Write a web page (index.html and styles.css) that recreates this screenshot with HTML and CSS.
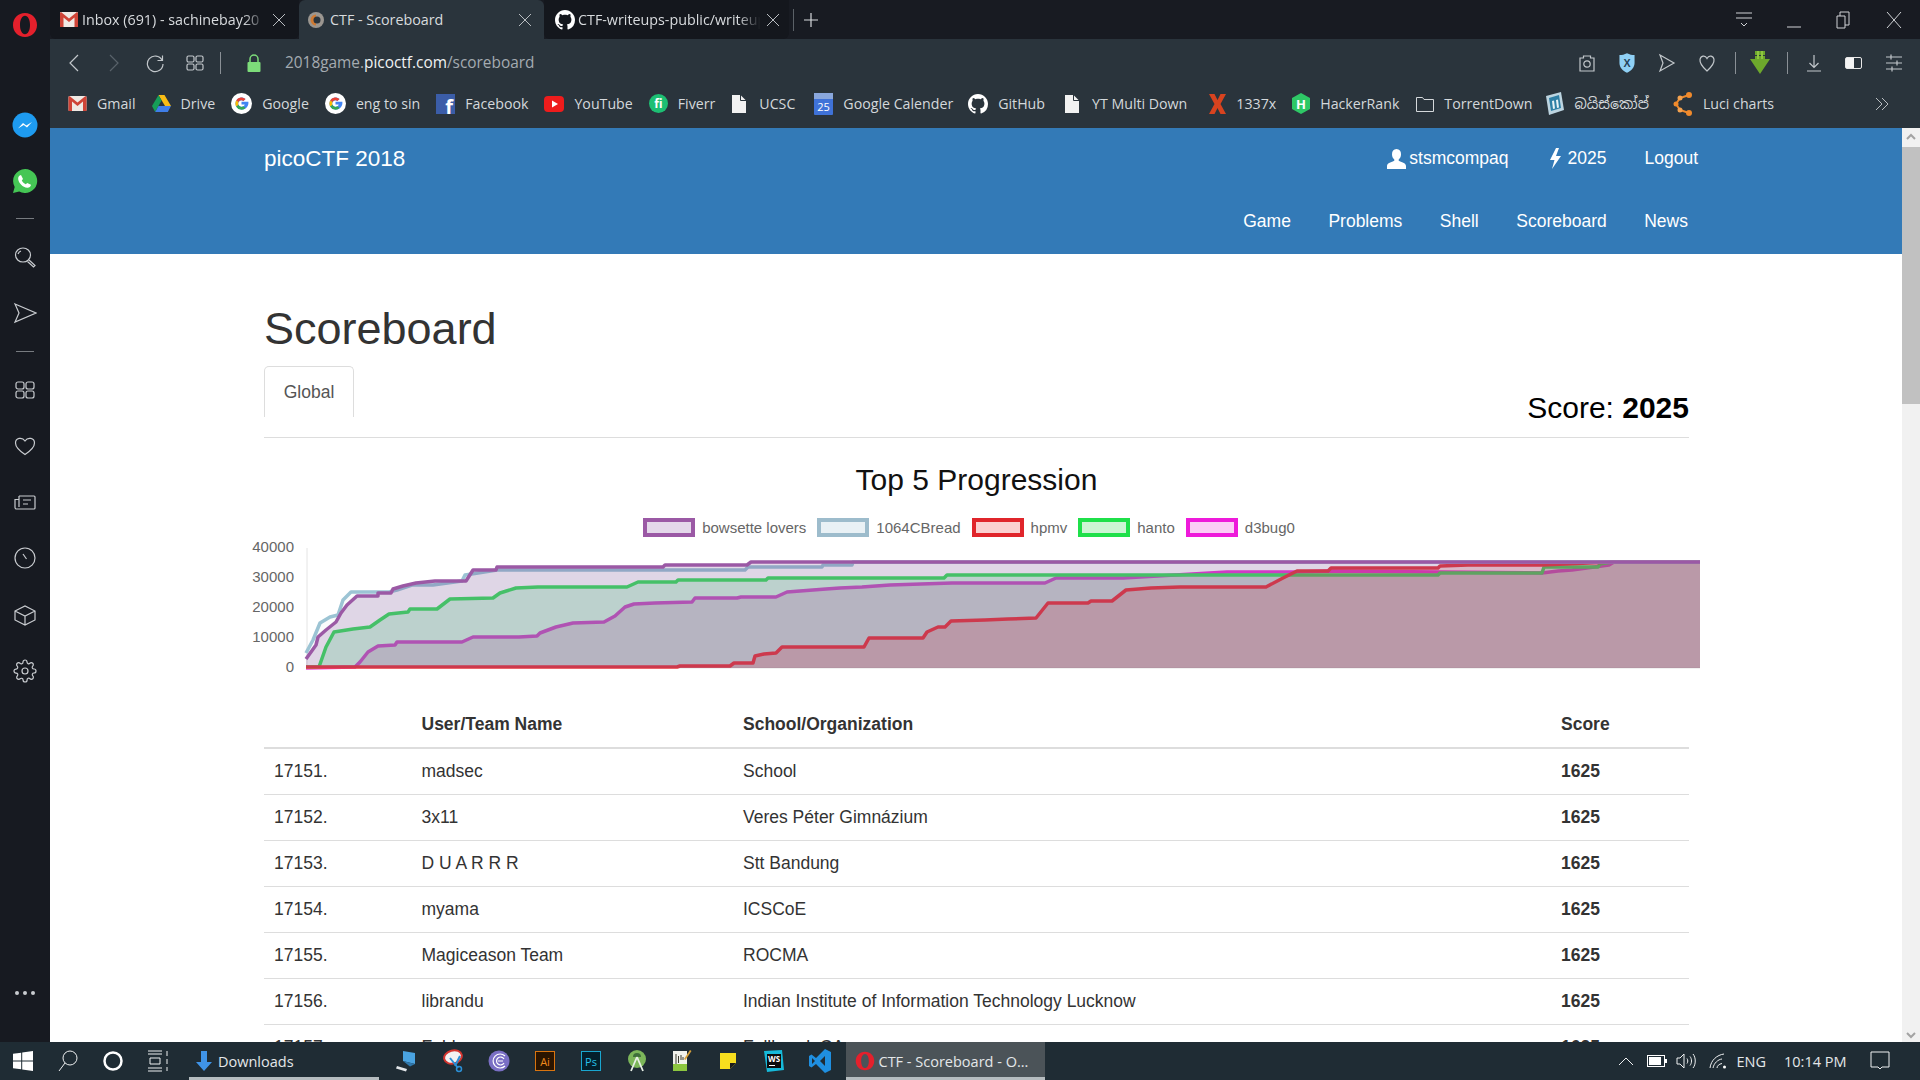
FILE: index.html
```html
<!DOCTYPE html>
<html lang="en">
<head>
    <meta charset="UTF-8">
    <title>CTF - Scoreboard</title>
    <link rel="stylesheet" href="styles.css">
</head>
<body>
    <svg class="sprite" width="0" height="0">
        <symbol id="g-logo" viewBox="0 0 22 22">
            <circle cx="11" cy="11" r="11" fill="#fff"/>
            <path d="M11 9.2h7.2c.6 4.4-2.4 8.2-7.2 8.2a6.4 6.4 0 0 1 0-12.8c1.7 0 3.1.6 4.2 1.6l-2.2 2.2A3.4 3.4 0 0 0 7.6 11c0 1.9 1.5 3.4 3.4 3.4 1.8 0 3-1 3.3-2.4H11z" fill="#4285f4"/>
            <path d="M5.4 7.9a6.4 6.4 0 0 1 9.8-1.7L13 8.4a3.4 3.4 0 0 0-5.1.9z" fill="#ea4335"/>
            <path d="M4.6 11c0-1.1.3-2.2.8-3.1l2.5 1.4a3.4 3.4 0 0 0 0 3.4l-2.5 1.4a6.4 6.4 0 0 1-.8-3.1z" fill="#fbbc05"/>
            <path d="M5.4 14.1l2.5-1.4a3.4 3.4 0 0 0 5 1.2l2.4 1.9a6.4 6.4 0 0 1-9.9-1.7z" fill="#34a853"/>
        </symbol>
        <symbol id="doc" viewBox="0 0 16 20">
            <path d="M1 1h8.5L15 6.5V19H1z" fill="#f2f2f2"/>
            <path d="M9.5 1v5.5H15" fill="none" stroke="#2a343c"/>
        </symbol>
        <symbol id="octo" viewBox="0 0 16 16">
            <path fill="#fff" d="M8 0C3.58 0 0 3.58 0 8c0 3.54 2.29 6.53 5.47 7.59.4.07.55-.17.55-.38 0-.19-.01-.82-.01-1.49-2.01.37-2.53-.49-2.69-.94-.09-.23-.48-.94-.82-1.13-.28-.15-.68-.52-.01-.53.63-.01 1.08.58 1.23.82.72 1.21 1.87.87 2.33.66.07-.52.28-.87.51-1.07-1.78-.2-3.64-.89-3.64-3.95 0-.87.31-1.59.82-2.15-.08-.2-.36-1.02.08-2.12 0 0 .67-.21 2.2.82.64-.18 1.32-.27 2-.27s1.36.09 2 .27c1.53-1.04 2.2-.82 2.2-.82.44 1.1.16 1.92.08 2.12.51.56.82 1.27.82 2.15 0 3.07-1.87 3.75-3.65 3.95.29.25.54.73.54 1.48 0 1.07-.01 1.93-.01 2.2 0 .21.15.46.55.38A8.01 8.01 0 0 0 16 8c0-4.42-3.58-8-8-8z"/>
        </symbol>
        <symbol id="opera-o" viewBox="0 0 26 26">
            <path fill-rule="evenodd" d="M13 1c7 0 12 5.3 12 12s-5 12-12 12S1 19.700 1 13 6 1 13 1zm0 2.800c-3 0-5 4-5 9.200s2 9.200 5 9.200 5-4 5-9.200-2-9.200-5-9.200z" fill="#e4202c"/>
        </symbol>
        <symbol id="gmail" viewBox="0 0 18 15">
            <rect width="18" height="15" rx="1" fill="#efe9e4"/>
            <path d="M0 1v14h3.500V5.500L9 10l5.500-4.500V15H18V1l-1-1-8 6.500L1 0z" fill="#cf4437"/>
        </symbol>
    </svg>

    <div class="browser">
        <nav class="sidebar">
            <div class="opera-slot">
                <svg width="26" height="26"><use href="#opera-o"/></svg>
            </div>
            <div class="side-item">
                <svg width="26" height="26" viewBox="0 0 26 26"><circle cx="13" cy="13" r="12.5" fill="#1e9bf0"/><path d="M6 16.500l5-5.500 3.300 2.500L20 10l-5 5.500-3.300-2.500z" fill="#fff"/></svg>
            </div>
            <div class="side-item">
                <svg width="26" height="26" viewBox="0 0 26 26"><path d="M13 1a12 12 0 0 0-10.300 18L1 25l6.200-1.600A12 12 0 1 0 13 1z" fill="#45c655"/><path d="M9 7l2 4-1.200 1.500c.9 1.800 2.200 3 4 3.800l1.400-1.300 3.800 1.800c-.3 2.200-2 3.200-3.800 3-4.500-.6-8.400-4.500-9-8.600C5.900 9 7 7.400 9 7z" fill="#fff"/></svg>
            </div>
            <div class="side-rule"></div>
            <div class="side-item">
                <svg class="line-icon" width="24" height="24" viewBox="0 0 24 24"><ellipse cx="10" cy="10" rx="7.500" ry="7"/><path d="M8 6a5 5 0 0 0-3 3"/><path d="M16 15l6 5.500-1.500 1.500-6-5.500"/></svg>
            </div>
            <div class="side-item">
                <svg class="line-icon" width="24" height="24" viewBox="0 0 24 24"><path d="M2 3l21 9-21 9 4-9z"/></svg>
            </div>
            <div class="side-rule"></div>
            <div class="side-item">
                <svg class="line-icon" width="24" height="24" viewBox="0 0 24 24"><rect x="3" y="4" width="8" height="7" rx="2"/><rect x="13" y="4" width="8" height="7" rx="2"/><rect x="3" y="13" width="8" height="7" rx="2"/><rect x="13" y="13" width="8" height="7" rx="2"/></svg>
            </div>
            <div class="side-item">
                <svg class="line-icon" width="24" height="24" viewBox="0 0 24 24"><path d="M12 20.500C6 16.500 2.500 13 2.500 9c0-5 6.500-6.500 9.500-2 3-4.500 9.500-3 9.500 2 0 4-3.500 7.500-9.500 11.500z"/></svg>
            </div>
            <div class="side-item">
                <svg class="line-icon" width="24" height="24" viewBox="0 0 24 24"><path d="M6 6h15a1 1 0 0 1 1 1v11a1 1 0 0 1-1 1H3.500A1.500 1.500 0 0 1 2 17.500V9.500h4M6 6v11M10 10h8M10 14h5"/></svg>
            </div>
            <div class="side-item">
                <svg class="line-icon" width="24" height="24" viewBox="0 0 24 24"><circle cx="12" cy="12" r="10"/><path d="M10 8l3.500 5"/></svg>
            </div>
            <div class="side-item">
                <svg class="line-icon" width="24" height="24" viewBox="0 0 24 24"><path d="M2 8l10-5 10 5v9l-10 5-10-5zM2 8l10 5 10-5M12 13v9"/></svg>
            </div>
            <div class="side-item">
                <svg class="line-icon" width="24" height="24" viewBox="0 0 24 24"><circle cx="12" cy="12" r="3"/><path d="M19.400 15a1.650 1.650 0 0 0 .33 1.820l.06.06a2 2 0 0 1 0 2.830 2 2 0 0 1-2.830 0l-.06-.06a1.650 1.650 0 0 0-1.820-.33 1.650 1.650 0 0 0-1 1.510V21a2 2 0 0 1-2 2 2 2 0 0 1-2-2v-.09A1.650 1.650 0 0 0 9 19.400a1.650 1.650 0 0 0-1.820.33l-.06.06a2 2 0 0 1-2.830 0 2 2 0 0 1 0-2.830l.06-.06a1.650 1.650 0 0 0 .33-1.820 1.650 1.650 0 0 0-1.510-1H3a2 2 0 0 1-2-2 2 2 0 0 1 2-2h.09A1.650 1.650 0 0 0 4.600 9a1.650 1.650 0 0 0-.33-1.820l-.06-.06a2 2 0 0 1 0-2.830 2 2 0 0 1 2.830 0l.06.06a1.650 1.650 0 0 0 1.820.33H9a1.650 1.650 0 0 0 1-1.510V3a2 2 0 0 1 2-2 2 2 0 0 1 2 2v.09a1.650 1.650 0 0 0 1 1.510 1.650 1.650 0 0 0 1.820-.33l.06-.06a2 2 0 0 1 2.830 0 2 2 0 0 1 0 2.830l-.06.06a1.650 1.650 0 0 0-.33 1.820V9a1.650 1.650 0 0 0 1.510 1H21a2 2 0 0 1 2 2 2 2 0 0 1-2 2h-.09a1.650 1.650 0 0 0-1.510 1z"/></svg>
            </div>
            <div class="side-dots"><span></span><span></span><span></span></div>
        </nav>

        <div class="main">
            <div class="tabbar">
                <div class="tab tab-first">
                    <svg class="tab-icon" width="18" height="15"><use href="#gmail"/></svg>
                    <span class="tab-title tab-title-fade">Inbox (691) - sachinebay20</span>
                    <svg class="tab-close" width="14" height="14" viewBox="0 0 14 14"><path d="M1 1l12 12M13 1L1 13"/></svg>
                </div>
                <div class="tab tab-active">
                    <svg class="tab-icon" width="18" height="18" viewBox="0 0 18 18"><circle cx="9" cy="9" r="8" fill="#9b9690"/><path d="M9 3.500a5.500 5.500 0 0 0 0 11z" fill="#cf7a33"/><circle cx="10" cy="9" r="3.500" fill="#2a343c"/></svg>
                    <span class="tab-title">CTF - Scoreboard</span>
                    <svg class="tab-close" width="14" height="14" viewBox="0 0 14 14"><path d="M1 1l12 12M13 1L1 13"/></svg>
                </div>
                <div class="tab tab-last">
                    <svg class="tab-icon" width="20" height="20"><use href="#octo"/></svg>
                    <span class="tab-title tab-title-fade">CTF-writeups-public/writeups</span>
                    <svg class="tab-close" width="14" height="14" viewBox="0 0 14 14"><path d="M1 1l12 12M13 1L1 13"/></svg>
                </div>
                <div class="tab-sep"></div>
                <svg class="tab-plus" width="16" height="16" viewBox="0 0 16 16"><path d="M8 1v14M1 8h14"/></svg>
                <div class="win-controls">
                    <div class="win-btn"><svg width="20" height="20" viewBox="0 0 20 20"><path d="M2 3h16M2 8h16M7 13l3 3 3-3"/></svg></div>
                    <div class="win-btn"><svg width="20" height="20" viewBox="0 0 20 20"><path d="M3 17h14"/></svg></div>
                    <div class="win-btn"><svg width="20" height="20" viewBox="0 0 20 20"><path d="M6 6V2h9v13h-4M3 6h8v12H3z"/></svg></div>
                    <div class="win-btn"><svg width="20" height="20" viewBox="0 0 20 20"><path d="M3 2l14 16M17 2L3 18"/></svg></div>
                </div>
            </div>

            <div class="toolbar">
                <div class="tool"><svg class="tool-line" width="20" height="20" viewBox="0 0 20 20"><path d="M14 2l-8 8 8 8"/></svg></div>
                <div class="tool"><svg class="tool-line tool-dim" width="20" height="20" viewBox="0 0 20 20"><path d="M6 2l8 8-8 8"/></svg></div>
                <div class="tool tool-reload"><svg class="tool-line" width="20" height="20" viewBox="0 0 20 20"><path d="M17 7a7.800 7.800 0 1 0 1 4M17.500 2.500V7.500h-5"/></svg></div>
                <div class="tool"><svg class="tool-line" width="20" height="20" viewBox="0 0 20 20"><rect x="2" y="3" width="7" height="6" rx="1.500"/><rect x="11" y="3" width="7" height="6" rx="1.500"/><rect x="2" y="11" width="7" height="6" rx="1.500"/><rect x="11" y="11" width="7" height="6" rx="1.500"/></svg></div>
                <div class="tool-sep tool-sep-left"></div>
                <div class="tool"><svg width="16" height="20" viewBox="0 0 16 20"><path d="M4 9V6a4 4 0 0 1 8 0v3" fill="none" stroke="#7ddc7a" stroke-width="1.500"/><rect x="1.500" y="9" width="13" height="10" rx="1" fill="#7ddc7a"/></svg></div>
                <div class="url"><span>2018game.</span><b>picoctf.com</b><span>/scoreboard</span></div>
                <div class="tool-right">
                    <div class="tool"><svg class="tool-line" width="20" height="20" viewBox="0 0 20 20"><path d="M3 5h3.500V3h7v2H17v13H3z"/><circle cx="10" cy="11" r="3.200"/></svg></div>
                    <div class="tool"><svg width="16" height="20" viewBox="0 0 18 22"><path d="M9 0c3 1.500 5.500 2 8.500 2v9c0 5-3.500 8.500-8.500 11C4 19.500.5 16 .5 11V2C3.500 2 6 1.500 9 0z" fill="#8fd0f5"/><text x="9" y="15" class="shield-x">X</text></svg></div>
                    <div class="tool"><svg class="tool-line" width="20" height="20" viewBox="0 0 20 20"><path d="M3 2l14 8-14 8 3-8z"/></svg></div>
                    <div class="tool"><svg class="tool-line" width="20" height="20" viewBox="0 0 20 20"><path d="M10 18C5 13.500 2.500 10.500 3 6.500c.5-3.500 5-5 7-1 2-4 6.500-2.500 7 1 .5 4-2 7-7 11.500z"/></svg></div>
                    <div class="tool-sep tool-sep-a"></div>
                    <div class="tool"><svg width="22" height="24" viewBox="0 0 22 24"><path d="M6 0h10v4H6zM6 5h10v3h5L11 23 1 8h5z" fill="#6da82c"/><path d="M8 0h2v8H8zM12 0h2v8h-2z" fill="#8ec63f"/></svg></div>
                    <div class="tool-sep tool-sep-b"></div>
                    <div class="tool"><svg class="tool-line" width="20" height="20" viewBox="0 0 20 20"><path d="M10 2v12M5.500 10l4.500 4.500 4.500-4.500M3 18h14"/></svg></div>
                    <div class="tool"><svg width="20" height="20" viewBox="0 0 20 20"><rect x="1.500" y="4.500" width="16" height="11" rx="1.500" fill="#2a343c" stroke="#e8e8e8"/><rect x="2" y="5" width="8" height="10" fill="#f4f4f4"/></svg></div>
                    <div class="tool"><svg class="tool-line" width="20" height="20" viewBox="0 0 20 20"><path d="M2 4h16M2 10h16M2 16h16M7 1.500v5M13 7.500v5M8 13.500v5"/></svg></div>
                </div>
            </div>

            <div class="bookmarks">
                <div class="bm"><svg width="19" height="15"><use href="#gmail"/></svg>Gmail</div>
                <div class="bm"><svg width="19" height="17" viewBox="0 0 19 17"><path d="M6.500 0h6l6.500 11h-6z" fill="#f9bc15"/><path d="M6.500 0l3 5.500L3.200 17 0 11z" fill="#169d58"/><path d="M6.500 11H19l-3.200 6H3.200z" fill="#3f7ee8"/></svg>Drive</div>
                <div class="bm"><svg width="21" height="21"><use href="#g-logo"/></svg>Google</div>
                <div class="bm"><svg width="21" height="21"><use href="#g-logo"/></svg>eng to sin</div>
                <div class="bm"><svg width="19" height="20" viewBox="0 0 19 20"><rect width="19" height="20" fill="#3b5da8"/><text x="13" y="20" class="fb-f">f</text></svg>Facebook</div>
                <div class="bm"><svg width="20" height="16" viewBox="0 0 20 16"><rect width="20" height="16" rx="4" fill="#ee1c1c"/><path d="M8 4.500l6 3.500-6 3.500z" fill="#fff"/></svg>YouTube</div>
                <div class="bm"><svg width="19" height="19" viewBox="0 0 19 19"><circle cx="9.500" cy="9.500" r="9.500" fill="#1dbf73"/><text x="9.500" y="14" class="fiverr-fi">fi</text></svg>Fiverr</div>
                <div class="bm bm-doc"><svg width="16" height="20"><use href="#doc"/></svg>UCSC</div>
                <div class="bm"><svg width="19" height="22" viewBox="0 0 19 22"><rect width="19" height="22" rx="1" fill="#3f72d8"/><rect width="19" height="6" fill="#8aa7dc"/><text x="9.500" y="18" class="cal-day">25</text></svg>Google Calender</div>
                <div class="bm"><svg width="20" height="20"><use href="#octo"/></svg>GitHub</div>
                <div class="bm bm-doc"><svg width="16" height="20"><use href="#doc"/></svg>YT Multi Down</div>
                <div class="bm"><svg width="17" height="20" viewBox="0 0 17 20"><path d="M0 0h5.500l3 6 3-6H17l-5.500 10L17 20h-5.500l-3-6-3 6H0l5.500-10z" fill="#d8431f"/></svg>1337x</div>
                <div class="bm"><svg width="18" height="21" viewBox="0 0 18 21"><path d="M9 0l9 5v11l-9 5-9-5V5z" fill="#2ec866"/><text x="9" y="15.500" class="hr-h">H</text></svg>HackerRank</div>
                <div class="bm"><svg class="folder" width="18" height="16" viewBox="0 0 18 16"><path d="M.5 1.500h6l1.500 2h9.500v12H.5z"/></svg>TorrentDown</div>
                <div class="bm"><svg width="20" height="23" viewBox="0 0 20 23"><path d="M1 4l15-4 3 18-15 5z" fill="#bcd4e0"/><path d="M4 6l10-3 2 13-10 3z" fill="#2f7fa5"/><path d="M7 9l2-.5 1 8-2 .5zM11 8l2-.5 1 8-2 .5z" fill="#e8f2f6"/></svg><span class="sinhala">බයිස්කෝප්</span></div>
                <div class="bm"><svg width="20" height="24" viewBox="0 0 20 24"><path d="M16 3L7 6 3 12l4 6 9 3" fill="none" stroke="#f08a2c" stroke-width="2"/><circle cx="16" cy="3" r="3" fill="#f08a2c"/><circle cx="7" cy="6" r="2.500" fill="#f4a24f"/><circle cx="3" cy="12" r="2.500" fill="#f08a2c"/><circle cx="7" cy="18" r="2.500" fill="#f4a24f"/><circle cx="16" cy="21" r="3" fill="#f08a2c"/></svg>Luci charts</div>
                <svg class="bm-more" width="16" height="16" viewBox="0 0 16 16"><path d="M2 2l6 6-6 6M8 2l6 6-6 6"/></svg>
            </div>

            <div class="viewport">
                <div class="page">
                    <header class="navbar">
                        <div class="nav-top">
                            <a class="brand">picoCTF 2018</a>
                            <div class="nav-links">
                                <a class="nav-user"><svg width="19" height="20" viewBox="0 0 19 20"><path d="M9.500 0c3 0 4.500 2.200 4.500 5.200 0 2.300-1 4.300-2.300 5.300v1.200c2.500 1.300 7.300 2 7.300 5.300V20H0v-3c0-3.300 4.800-4 7.300-5.300v-1.200C6 9.500 5 7.500 5 5.200 5 2.200 6.500 0 9.500 0z" fill="#fff"/></svg>stsmcompaq</a>
                                <a class="nav-score"><svg width="12" height="21" viewBox="0 0 12 21"><path d="M7 0L1 12h4.500L3 21l9-13H7l3-8z" fill="#fff"/></svg>2025</a>
                                <a>Logout</a>
                            </div>
                        </div>
                        <div class="nav-links nav-second">
                            <a>Game</a>
                            <a>Problems</a>
                            <a>Shell</a>
                            <a>Scoreboard</a>
                            <a>News</a>
                        </div>
                    </header>

                    <section class="content">
                        <h1>Scoreboard</h1>
                        <div class="tab-row">
                            <div class="board-tab">Global</div>
                            <div class="score">Score: <b>2025</b></div>
                        </div>

                        <h3 class="chart-title">Top 5 Progression</h3>
                        <div class="legend">
                            <div class="legend-item"><i class="swatch swatch-bowsette"></i>bowsette lovers</div>
                            <div class="legend-item"><i class="swatch swatch-bread"></i>1064CBread</div>
                            <div class="legend-item"><i class="swatch swatch-hpmv"></i>hpmv</div>
                            <div class="legend-item"><i class="swatch swatch-hanto"></i>hanto</div>
                            <div class="legend-item"><i class="swatch swatch-d3bug"></i>d3bug0</div>
                        </div>
                        <svg class="chart" width="1460" height="150" viewBox="250 540 1460 150">
                            <g class="axis-labels">
                                <text x="294" y="552">40000</text>
                                <text x="294" y="582">30000</text>
                                <text x="294" y="612">20000</text>
                                <text x="294" y="642">10000</text>
                                <text x="294" y="672">0</text>
                            </g>
                            <path class="axis" d="M307 548V668H1700"/>

                            <polygon class="fill-d3bug" points="306,668 355,667 360,662 368,652 378,646 395,645 397,642 462,642 473,637 519,637 537,636 540,633 556,627 573,623 604,622 615,616 625,607 634,604 655,603 692,602 695,598 737,598 741,597 776,597 787,592 826,589 840,588 862,587 890,585 952,583 1045,583 1056,578 1123,578 1227,572 1297,572 1331,571 1438,572 1542,573 1558,571 1572,570 1609,565 1614,562 1700,562 1700,668"/>
                            <polyline class="line-d3bug" points="306,668 355,667 360,662 368,652 378,646 395,645 397,642 462,642 473,637 519,637 537,636 540,633 556,627 573,623 604,622 615,616 625,607 634,604 655,603 692,602 695,598 737,598 741,597 776,597 787,592 826,589 840,588 862,587 890,585 952,583 1045,583 1056,578 1123,578 1227,572 1297,572 1331,571 1438,572 1542,573 1558,571 1572,570 1609,565 1614,562 1700,562"/>

                            <polygon class="fill-hanto" points="306,667 319,667 326,647 334,632 353,629 370,627 380,620 389,614 408,612 410,609 437,609 450,599 493,598 500,593 516,588 538,587 627,587 638,582 676,582 678,580 766,580 768,578 944,578 947,575 1438,575 1440,573 1542,573 1544,567 1598,567 1600,564 1612,562 1700,562 1700,668 306,668"/>
                            <polyline class="line-hanto" points="306,667 319,667 326,647 334,632 353,629 370,627 380,620 389,614 408,612 410,609 437,609 450,599 493,598 500,593 516,588 538,587 627,587 638,582 676,582 678,580 766,580 768,578 944,578 947,575 1438,575 1440,573 1542,573 1544,567 1598,567 1600,564 1612,562 1700,562"/>

                            <polygon class="fill-hpmv" points="306,667 677,667 680,666 730,666 734,663 753,663 755,656 764,654 776,653 782,647 864,647 869,638 923,638 927,632 938,627 945,627 951,621 985,620 1008,619 1036,618 1048,603 1088,603 1091,601 1112,601 1126,590 1151,588 1180,587 1266,587 1283,578 1297,571 1328,571 1331,568 1438,568 1440,566 1468,565 1542,565 1612,562 1700,562 1700,668 306,668"/>
                            <polyline class="line-hpmv" points="306,667 677,667 680,666 730,666 734,663 753,663 755,656 764,654 776,653 782,647 864,647 869,638 923,638 927,632 938,627 945,627 951,621 985,620 1008,619 1036,618 1048,603 1088,603 1091,601 1112,601 1126,590 1151,588 1180,587 1266,587 1283,578 1297,571 1328,571 1331,568 1438,568 1440,566 1468,565 1542,565 1612,562 1700,562"/>

                            <polygon class="fill-bread" points="306,653 313,640 320,623 330,617 338,615 343,600 351,592 389,592 397,590 412,585 433,585 462,581 465,575 478,573 497,570 745,570 748,567 822,567 823,565 852,565 853,562 1700,562 1700,668 306,668"/>
                            <polyline class="line-bread" points="306,653 313,640 320,623 330,617 338,615 343,600 351,592 389,592 397,590 412,585 433,585 462,581 465,575 478,573 497,570 745,570 748,567 822,567 823,565 852,565 853,562 1700,562"/>

                            <polygon class="fill-bowsette" points="306,659 316,645 318,637 326,630 336,622 341,613 347,605 357,596 378,596 378,593 391,593 393,589 403,586 416,583 435,581 466,581 473,570 496,570 497,567 663,567 665,565 747,565 751,562 1700,562 1700,668 306,668"/>
                            <polyline class="line-bowsette" points="306,659 316,645 318,637 326,630 336,622 341,613 347,605 357,596 378,596 378,593 391,593 393,589 403,586 416,583 435,581 466,581 473,570 496,570 497,567 663,567 665,565 747,565 751,562 1700,562"/>
                        </svg>

                        <table class="ranks">
                            <thead>
                                <tr><th class="col-rank"></th><th class="col-name">User/Team Name</th><th class="col-school">School/Organization</th><th>Score</th></tr>
                            </thead>
                            <tbody>
                                <tr><td>17151.</td><td>madsec</td><td>School</td><td class="points">1625</td></tr>
                                <tr><td>17152.</td><td>3x11</td><td>Veres Péter Gimnázium</td><td class="points">1625</td></tr>
                                <tr><td>17153.</td><td>D U A R R R</td><td>Stt Bandung</td><td class="points">1625</td></tr>
                                <tr><td>17154.</td><td>myama</td><td>ICSCoE</td><td class="points">1625</td></tr>
                                <tr><td>17155.</td><td>Magiceason Team</td><td>ROCMA</td><td class="points">1625</td></tr>
                                <tr><td>17156.</td><td>librandu</td><td>Indian Institute of Information Technology Lucknow</td><td class="points">1625</td></tr>
                                <tr><td>17157.</td><td>Fabb</td><td>Fallbrook CA</td><td class="points">1625</td></tr>
                            </tbody>
                        </table>
                    </section>
                </div>
                <div class="scrollbar">
                    <svg class="scroll-arrow" width="18" height="19" viewBox="0 0 18 19"><path d="M5 11l4-4 4 4"/></svg>
                    <div class="scroll-thumb"></div>
                    <svg class="scroll-arrow scroll-down" width="18" height="14" viewBox="0 0 18 14"><path d="M5 5l4 4 4-4"/></svg>
                </div>
            </div>
        </div>
    </div>

    <footer class="taskbar">
        <div class="task-start"><svg width="20" height="20" viewBox="0 0 20 20"><path d="M0 2.800L8.200 1.700V9.500H0zM9.200 1.500L20 0v9.500H9.200zM0 10.500h8.200v7.800L0 17.200zM9.200 10.500H20V20L9.200 18.500z" fill="#fff"/></svg></div>
        <div class="task-start"><svg class="task-line" width="20" height="22" viewBox="0 0 20 22"><circle cx="12" cy="8" r="7"/><path d="M7 13l-6 8"/></svg></div>
        <div class="task-start"><svg width="20" height="20" viewBox="0 0 20 20"><circle cx="10" cy="10" r="8.500" fill="none" stroke="#fff" stroke-width="2.500"/></svg></div>
        <div class="task-start"><svg class="task-line" width="22" height="22" viewBox="0 0 22 22"><path d="M1 1h14M1 4h14M3 8h10v6H3zM1 18h14M1 21h14M20 1v5M20 9v5M20 17v4"/></svg></div>
        <div class="task-window task-downloads">
            <svg width="16" height="20" viewBox="0 0 16 20"><path d="M5 0h6v11h5l-8 9-8-9h5z" fill="#3f94e8"/></svg>
            Downloads
        </div>
        <div class="task-apps">
            <div class="app"><svg width="24" height="24" viewBox="0 0 24 24"><path d="M7 2l12 2v11L7 12z" fill="#4aa3e0"/><path d="M19 15l-5 2.500-7-5.500z" fill="#2f78ad"/><path d="M1 17l10 3-1 2.500-10-3z" fill="#e3e7ea"/></svg></div>
            <div class="app"><svg width="24" height="24" viewBox="0 0 24 24"><ellipse cx="11" cy="8" rx="9" ry="6.500" fill="#f2f2f2" stroke="#d4352f" stroke-width="2" transform="rotate(-15 11 8)"/><path d="M8 9l8 10M18 7l-5 10" stroke="#2b8fd6" stroke-width="2" fill="none"/><circle cx="17" cy="20" r="2.500" fill="none" stroke="#2b8fd6" stroke-width="1.500"/></svg></div>
            <div class="app"><svg width="22" height="24" viewBox="0 0 22 24"><circle cx="11" cy="12" r="10.500" fill="#7a6fc4"/><path d="M17 17a7 7 0 1 1 0-10M16 14a4 4 0 1 1 0-4M15 12H10" fill="none" stroke="#fff" stroke-width="1.200"/></svg></div>
            <div class="app"><svg width="20" height="20" viewBox="0 0 20 20"><rect x=".5" y=".5" width="19" height="19" fill="#2b1500" stroke="#d9740f"/><text x="10" y="14.500" class="app-ai">Ai</text></svg></div>
            <div class="app"><svg width="20" height="20" viewBox="0 0 20 20"><rect x=".5" y=".5" width="19" height="19" fill="#041f2c" stroke="#1aa6cf"/><text x="10" y="14.500" class="app-ps">Ps</text></svg></div>
            <div class="app"><svg width="20" height="24" viewBox="0 0 20 24"><circle cx="10" cy="10" r="9" fill="#7cb65a"/><path d="M6 8a4 4 0 0 1 8 0z" fill="#3f6f3a"/><path d="M10 8L4 22M10 8l6 14" stroke="#e8efe6" stroke-width="1.800" fill="none"/></svg></div>
            <div class="app"><svg width="20" height="24" viewBox="0 0 20 24"><path d="M1 2h14v20H1z" fill="#f1f2ec"/><path d="M1 15h14v7H1z" fill="#8cc63f"/><path d="M4 5v10M6.500 7v7M9 6v5M11 8v3" stroke="#3b3b2e"/><path d="M12 10l6-9 1.500 1-6 9z" fill="#d9a23a"/></svg></div>
            <div class="app"><svg width="16" height="16" viewBox="0 0 16 16"><path d="M0 0h16v10l-6 6H0z" fill="#f7de1e"/><path d="M10 16v-6h6z" fill="#1b1b1b"/></svg></div>
            <div class="app"><svg width="20" height="22" viewBox="0 0 20 22"><path d="M0 1l18-1 2 20-17 2z" fill="#16b9d9"/><path d="M3 4h14v14H3z" fill="#0c0c0c"/><text x="10" y="12" class="app-ws">WS</text><path d="M5 15h6v1H5z" fill="#fff"/></svg></div>
            <div class="app"><svg width="22" height="24" viewBox="0 0 22 24"><path d="M16 0l6 3v18l-6 3-9-9-4.500 3.500L0 17V7l2.500-1.500L7 9z" fill="#1f8fe0"/><path d="M16 7l-5 5 5 5z" fill="#1f2c34"/><path d="M3 9v6l3-3z" fill="#1f2c34"/></svg></div>
        </div>
        <div class="task-window task-opera">
            <svg width="20" height="20"><use href="#opera-o"/></svg>
            CTF - Scoreboard - O...
        </div>
        <div class="tray">
            <svg class="tray-chevron task-line" width="16" height="10" viewBox="0 0 16 10"><path d="M1 9l7-7 7 7"/></svg>
            <svg class="tray-battery" width="20" height="12" viewBox="0 0 20 12"><rect x=".5" y=".5" width="17" height="11" fill="none" stroke="#fff"/><rect x="2" y="2" width="12" height="8" fill="#fff"/><rect x="18" y="4" width="2" height="4" fill="#fff"/></svg>
            <svg class="tray-sound task-line" width="20" height="16" viewBox="0 0 20 16"><path d="M1 5h3l4-4v14l-4-4H1zM11 5.500c1 1.500 1 3.500 0 5M14 3.500c2 2.500 2 6.500 0 9M17 1c3 3.500 3 10.500 0 14"/></svg>
            <svg class="tray-wifi task-line" width="18" height="16" viewBox="0 0 18 16"><path d="M1 15C2 7 8 2 15 1M4 15c1-5 5-8.500 9-9M8 15c0-2 2-4 5-4.500"/><circle cx="15.500" cy="14" r="1.500" fill="#fff" stroke="none"/></svg>
            <span class="tray-lang">ENG</span>
            <span class="tray-time">10:14 PM</span>
            <svg class="tray-note task-line" width="20" height="20" viewBox="0 0 20 20"><path d="M1 1h18v15h-7l-2 2-2-2H1z"/></svg>
        </div>
    </footer>
</body>
</html>
```

FILE: styles.css
```css
*{
    margin:0;padding:0;box-sizing:border-box;
}
html,body{
    width:1920px;height:1080px;overflow:hidden;
}
body{
    font-family:"Liberation Sans",Arial,sans-serif;
    background-color:#191c23;
}
.sprite{
    position:absolute;
}
svg{
    display:block;
    flex:none;
}

/* browser frame */
.browser{
    display:flex;
    height:1042px;
}
.sidebar{
    width:50px;
    flex:none;
    display:flex;
    flex-direction:column;
    align-items:center;
    background-color:#171a21;
}
.opera-slot{
    height:96.5px;
    width:100%;
    display:flex;
    justify-content:center;
    padding-top:12px;
}
.side-item{
    height:56.25px;
    flex:none;
    display:flex;
    align-items:center;
    justify-content:center;
}
.side-rule{
    width:18px;
    height:1px;
    background-color:#777b80;
    margin:9px 0 10px;
    flex:none;
}
.line-icon{
    fill:none;
    stroke:#c9ccd0;
    stroke-width:1.2;
}
.side-dots{
    margin-top:auto;
    margin-bottom:47px;
    display:flex;
    gap:4px;
}
.side-dots span{
    width:4px;
    height:4px;
    border-radius:50%;
    background-color:#c9ccd0;
}
.main{
    flex:1;
    min-width:0;
    display:flex;
    flex-direction:column;
}

/* tabs */
.tabbar{
    height:39px;
    flex:none;
    display:flex;
    align-items:center;
    background-color:#181b22;
    font-family:"Open Sans",sans-serif;
    font-size:14.3px;
    color:#d8dbde;
}
.tab{
    height:39px;
    display:flex;
    align-items:center;
    background-color:#14171d;
    border-radius:0 0 6px 6px;
}
.tab-first{
    width:249px;
    padding:0 13px 0 10px;
}
.tab-active{
    width:245px;
    padding:0 12px 0 8px;
    background-color:#2a343c;
    border-radius:6px 6px 0 0;
}
.tab-last{
    width:245px;
    padding:0 9px 0 11px;
}
.tab-icon{
    margin-right:4px;
}
.tab-active .tab-icon{
    margin-right:5px;
}
.tab-last .tab-icon{
    margin-right:3px;
}
.tab-title{
    flex:1;
    min-width:0;
    white-space:nowrap;
    overflow:hidden;
}
.tab-title-fade{
    -webkit-mask-image:linear-gradient(to right,#000 85%,transparent 97%);
    mask-image:linear-gradient(to right,#000 85%,transparent 97%);
}
.tab-close{
    fill:none;
    stroke:#b9bdc1;
    stroke-width:1;
}
.tab-sep{
    width:1px;
    height:22px;
    background-color:#5b6167;
    margin-left:4px;
}
.tab-plus{
    fill:none;
    stroke:#d8dbde;
    stroke-width:1.2;
    margin-left:9px;
}
.win-controls{
    margin-left:auto;
    margin-right:1px;
    display:flex;
}
.win-btn{
    width:50px;
    display:flex;
    justify-content:center;
}
.win-btn svg{
    fill:none;
    stroke:#d0d3d6;
    stroke-width:1;
}

/* address bar */
.toolbar{
    height:44px;
    flex:none;
    display:flex;
    align-items:center;
    padding:3px 6px 0 4px;
    background-color:#2a343c;
}
.tool{
    width:40px;
    flex:none;
    display:flex;
    align-items:center;
    justify-content:center;
}
.tool-reload{
    margin-left:1px;
}
.tool-line{
    fill:none;
    stroke:#c2c7cb;
    stroke-width:1.2;
}
.tool-dim{
    stroke:#59626a;
}
.tool-sep{
    width:1px;
    height:22px;
    background-color:#8a9096;
    flex:none;
}
.tool-sep-left{
    margin:0 13px 0 5px;
}
.tool-sep-a{
    margin:0 4px 0 8px;
}
.tool-sep-b{
    margin:0 6px 0 7px;
}
.url{
    margin-left:11px;
    font-family:"Open Sans",sans-serif;
    font-size:15.4px;
    color:#a4abb1;
    white-space:nowrap;
}
.url b{
    font-weight:400;
    color:#f0f2f3;
}
.tool-right{
    margin-left:auto;
    display:flex;
    align-items:center;
}
.shield-x{
    font-size:12px;
    font-weight:700;
    fill:#24425a;
    text-anchor:middle;
}

/* bookmarks */
.bookmarks{
    height:45px;
    flex:none;
    display:flex;
    align-items:center;
    padding:0 0 4px 18px;
    background-color:#2a343c;
    font-family:"Open Sans",sans-serif;
    font-size:14.2px;
    color:#d4d8db;
}
.bm{
    display:flex;
    align-items:center;
    gap:10px;
    margin-right:16px;
    white-space:nowrap;
}
.bm-doc{
    gap:12px;
}
/* the real bar is in a narrower font, so nudge the later items back in line */
.bm:nth-child(9){margin-left:3px;}
.bm:nth-child(10){margin-left:-1px;}
.bm:nth-child(11){margin-left:3px;}
.bm:nth-child(12){margin-left:6px;}
.bm:nth-child(14){margin-left:1px;}
.bm:nth-child(15){margin-left:-4px;}
.bm:nth-child(16){margin-left:8px;}
.sinhala{
    font-family:"Noto Sans","Noto Sans Sinhala",sans-serif;
}
.folder{
    fill:none;
    stroke:#d4d8db;
}
.bm-more{
    margin-left:auto;
    margin-right:30px;
    fill:none;
    stroke:#b9bdc1;
}
.fb-f{
    font-size:20px;
    font-weight:700;
    fill:#fff;
    text-anchor:middle;
}
.fiverr-fi{
    font-size:12px;
    font-weight:700;
    fill:#fff;
    text-anchor:middle;
}
.cal-day{
    font-size:11px;
    fill:#fff;
    text-anchor:middle;
}
.hr-h{
    font-size:13px;
    font-weight:700;
    fill:#fff;
    text-anchor:middle;
}

/* page */
.viewport{
    flex:1;
    min-height:0;
    display:flex;
}
.page{
    flex:1;
    min-width:0;
    overflow:hidden;
    background-color:#fff;
    color:#333;
    font-size:17.5px;
    line-height:25px;
}
.scrollbar{
    width:18px;
    flex:none;
    display:flex;
    flex-direction:column;
    background-color:#f1f1f1;
}
.scroll-arrow{
    fill:none;
    stroke:#a3a3a3;
    stroke-width:2;
}
.scroll-thumb{
    height:257px;
    background-color:#c1c1c1;
}
.scroll-down{
    margin-top:auto;
}
.navbar{
    height:126px;
    flex:none;
    padding-left:214px;
    background-color:#337ab7;
    color:#fff;
}
.nav-top{
    width:1434px;
    height:60px;
    padding-top:1px;
    display:flex;
    justify-content:space-between;
    align-items:center;
}
.brand{
    font-size:22.5px;
}
.nav-links{
    display:flex;
    align-items:center;
    gap:38px;
}
.nav-second{
    width:1424px;
    height:66px;
    gap:37.5px;
    justify-content:flex-end;
}
.nav-user,.nav-score{
    display:flex;
    align-items:center;
}
.nav-user{
    gap:3px;
    margin-right:2px;
}
.nav-score{
    gap:7px;
}

/* scoreboard */
.content{
    width:1425px;
    margin-left:214px;
    padding-top:50px;
}
h1{
    font-size:45px;
    font-weight:500;
    line-height:49.5px;
    margin-bottom:12.5px;
}
.tab-row{
    display:flex;
    justify-content:space-between;
    align-items:flex-end;
    padding-bottom:13.5px;
    border-bottom:1px solid #ddd;
}
.board-tab{
    width:90px;
    height:51px;
    margin-bottom:6.5px;
    display:flex;
    align-items:center;
    justify-content:center;
    color:#555;
    border:1px solid #ddd;
    border-bottom:0;
    border-radius:5px 5px 0 0;
}
.score{
    font-size:30px;
    line-height:33px;
    color:#000;
}
.chart-title{
    margin-top:24.5px;
    font-size:30px;
    font-weight:400;
    line-height:33px;
    color:#111;
    text-align:center;
}
.legend{
    margin-top:22px;
    height:19px;
    padding-right:15px;
    display:flex;
    justify-content:center;
    gap:11px;
    font-size:15px;
    line-height:19px;
    color:#666;
}
.legend-item{
    display:flex;
    gap:7px;
}
.swatch{
    width:52px;
    height:19px;
    border:4px solid;
}
.swatch-bowsette{
    border-color:#9b59a5;
    background-color:#e4d8ea;
}
.swatch-bread{
    border-color:#9dbccc;
    background-color:#e9f1f5;
}
.swatch-hpmv{
    border-color:#e0252b;
    background-color:#fbd0d0;
}
.swatch-hanto{
    border-color:#1fe04a;
    background-color:#cdf5d4;
}
.swatch-d3bug{
    border-color:#ee1ada;
    background-color:#fbcdf6;
}
.chart{
    display:block;
    margin:3px 0 0 -14px;
    overflow:visible;
}
.axis-labels text{
    font-size:15px;
    fill:#666;
    text-anchor:end;
}
.axis{
    fill:none;
    stroke:#e4e4e4;
}
.chart polyline{
    fill:none;
    stroke-width:3.5;
    stroke-linejoin:round;
}
.fill-d3bug{fill:rgba(217,25,167,.2);}
.fill-hanto{fill:rgba(35,225,100,.2);}
.fill-hpmv{fill:rgba(225,50,55,.2);}
.fill-bread{fill:rgba(150,185,205,.05);}
.fill-bowsette{fill:rgba(86,26,121,.16);}
.line-d3bug{stroke:#eb3ad6;}
.line-hanto{stroke:#3ee361;}
.line-hpmv{stroke:#e83a40;}
.line-bread{stroke:#9cc4d4;}
.line-bowsette{stroke:#9b59a5;}
.ranks{
    width:100%;
    margin-top:12px;
    border-collapse:collapse;
    table-layout:fixed;
}
.ranks th,.ranks td{
    padding:10px;
    text-align:left;
}
.ranks th{
    font-weight:700;
    border-bottom:2px solid #ddd;
}
.ranks td{
    border-bottom:1px solid #ddd;
}
.col-rank{
    width:147.5px;
}
.col-name{
    width:321.5px;
}
.col-school{
    width:818px;
}
.points{
    font-weight:700;
}

/* windows taskbar */
.taskbar{
    height:38px;
    display:flex;
    align-items:center;
    background-color:#1f2c34;
    font-family:"Open Sans",sans-serif;
    font-size:14.5px;
    color:#e4e7e9;
}
.task-start{
    width:45px;
    height:38px;
    flex:none;
    display:flex;
    align-items:center;
    justify-content:center;
}
.task-line{
    fill:none;
    stroke:#eef0f1;
    stroke-width:1;
}
.task-window{
    height:38px;
    padding-top:3px;
    display:flex;
    align-items:center;
    flex:none;
    border-bottom:3px solid #b5bcbf;
}
.task-downloads{
    width:190px;
    margin-left:9px;
    padding-left:7px;
    gap:6px;
}
.task-apps{
    display:flex;
    margin-left:6px;
}
.app{
    width:45.75px;
    height:38px;
    display:flex;
    align-items:center;
    justify-content:center;
}
.app-ai,.app-ps,.app-ws{
    font-size:11px;
    text-anchor:middle;
}
.app-ai{fill:#f08a1d;}
.app-ps{fill:#27c1ea;}
.app-ws{fill:#fff;font-size:8px;font-weight:700;}
.task-opera{
    width:199px;
    margin-left:3px;
    padding-left:9px;
    gap:4px;
    background-color:#4b5358;
}
.tray{
    flex:1;
    display:flex;
    align-items:center;
    height:38px;
    padding-left:573px;
}
.tray-battery{
    margin-left:13px;
}
.tray-sound{
    margin-left:9px;
}
.tray-wifi{
    margin-left:13px;
}
.tray-lang{
    margin-left:10px;
}
.tray-time{
    margin-left:18px;
}
.tray-note{
    margin-left:23px;
}
```
